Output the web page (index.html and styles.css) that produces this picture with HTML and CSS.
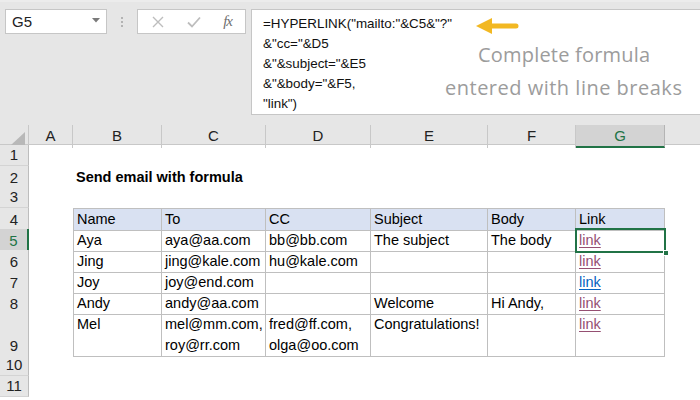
FILE: index.html
```html
<!DOCTYPE html>
<html>
<head>
<meta charset="utf-8">
<link rel="stylesheet" href="styles.css">
</head>
<body>
<div class="app">
  <div class="topbar">
    <div class="namebox">
      <span class="ref">G5</span>
      <svg class="dd" width="8" height="5" viewBox="0 0 8 5"><path d="M0 0H8L4 4.5Z" fill="#7a7a7a"/></svg>
    </div>
    <div class="sep"><i></i><i></i><i></i></div>
    <div class="fxbox">
      <svg width="12" height="12" viewBox="0 0 12 12"><path d="M1 1L11 11M11 1L1 11" stroke="#bdbdbd" stroke-width="1.4" fill="none"/></svg>
      <svg width="14" height="12" viewBox="0 0 14 12"><path d="M1 6.5L5 10.5L13 1.5" stroke="#bdbdbd" stroke-width="1.8" fill="none"/></svg>
      <span class="fx">fx</span>
    </div>
    <div class="formula">
      <div class="code">=HYPERLINK("mailto:"&amp;C5&amp;"?"<br>&amp;"cc="&amp;D5<br>&amp;"&amp;subject="&amp;E5<br>&amp;"&amp;body="&amp;F5,<br>"link")</div>
      <svg class="arrow" width="44" height="16" viewBox="0 0 44 16"><path d="M0 8L16 0V5.5H40A2.5 2.5 0 0 1 40 10.5H16V16Z" fill="#f2b822"/></svg>
      <div class="note n1">Complete formula</div>
      <div class="note n2">entered with line breaks</div>
    </div>
  </div>
  <div class="sheet">
    <div class="row hdr">
      <div class="corner"><svg width="14" height="13" viewBox="0 0 14 13"><path d="M14 0V13H0Z" fill="#b8b8b8"/></svg></div>
      <div class="ch">A</div><div class="ch">B</div><div class="ch">C</div><div class="ch">D</div><div class="ch">E</div><div class="ch">F</div><div class="ch sel">G</div><div class="ch last"></div>
    </div>
    <div class="row"><div class="rh">1</div></div>
    <div class="row"><div class="rh">2</div><div></div><div class="title">Send email with formula</div></div>
    <div class="row"><div class="rh">3</div></div>
    <div class="row th"><div class="rh">4</div><div></div>
      <div class="c first">Name</div><div class="c">To</div><div class="c">CC</div><div class="c">Subject</div><div class="c">Body</div><div class="c">Link</div></div>
    <div class="row"><div class="rh active">5</div><div></div>
      <div class="c first">Aya</div><div class="c">aya@aa.com</div><div class="c">bb@bb.com</div><div class="c">The subject</div><div class="c">The body</div><div class="c cur"><span class="lk v">link</span><span class="handle"></span></div></div>
    <div class="row"><div class="rh">6</div><div></div>
      <div class="c first">Jing</div><div class="c">jing@kale.com</div><div class="c">hu@kale.com</div><div class="c"></div><div class="c"></div><div class="c"><span class="lk v">link</span></div></div>
    <div class="row"><div class="rh">7</div><div></div>
      <div class="c first">Joy</div><div class="c">joy@end.com</div><div class="c"></div><div class="c"></div><div class="c"></div><div class="c"><span class="lk">link</span></div></div>
    <div class="row"><div class="rh">8</div><div></div>
      <div class="c first">Andy</div><div class="c">andy@aa.com</div><div class="c"></div><div class="c">Welcome</div><div class="c">Hi Andy,</div><div class="c"><span class="lk v">link</span></div></div>
    <div class="row tall"><div class="rh">9</div><div></div>
      <div class="c first">Mel</div><div class="c">mel@mm.com,<br>roy@rr.com</div><div class="c">fred@ff.com,<br>olga@oo.com</div><div class="c">Congratulations!</div><div class="c"></div><div class="c"><span class="lk v">link</span></div></div>
    <div class="row"><div class="rh">10</div></div>
    <div class="row"><div class="rh">11</div></div>
  </div>
</div>
</body>
</html>
```
FILE: styles.css
```css
* { box-sizing: border-box; }
html, body { margin: 0; padding: 0; }
body {
  width: 700px; height: 400px; overflow: hidden;
  font-family: "Liberation Sans", Arial, sans-serif;
  font-size: 14.5px; color: #000; background: #fff;
}
.app { width: 700px; height: 400px; overflow: hidden; }
.topbar {
  height: 125px; background: #e6e6e6;
  display: flex; align-items: flex-start;
  padding: 7px 0 0 5px;
  border-top: 2px solid #ececec;
}
.namebox {
  width: 102px; height: 25px; background: #fff;
  border: 1px solid #c6c6c6;
  display: flex; align-items: center; justify-content: space-between;
  padding: 0 6px 0 6px;
}
.ref { font-size: 15px; color: #222; }
.dd { margin-top: -2px; }
.sep {
  width: 30px; height: 25px;
  display: flex; flex-direction: column; align-items: center; justify-content: center; gap: 2px;
}
.sep i { display: block; width: 2px; height: 2px; background: #b3b3b3; }
.fxbox {
  width: 109px; height: 25px; background: #fff;
  border: 1px solid #c6c6c6;
  display: flex; align-items: center; justify-content: space-between;
  padding: 0 13px 0 14px;
}
.fx {
  font-family: "Liberation Serif", serif; font-style: italic;
  font-size: 15px; color: #6f6f6f; letter-spacing: -1px;
}
.formula {
  flex: 1; height: 106px; margin-left: 5px;
  background: #fff; border: 1px solid #c6c6c6; border-right: none;
  position: relative;
  padding: 4px 0 0 11px;
}
.code { line-height: 20px; font-size: 13.4px; color: #111; }
.arrow { position: absolute; left: 224px; top: 8px; }
.note {
  position: absolute; font-family: "Open Sans", sans-serif;
  font-size: 20px; color: #9c9c9c; white-space: nowrap; line-height: 24px;
}
.n1 { left: 226px; top: 33px; letter-spacing: 0.2px; }
.n2 { left: 193px; top: 66px; letter-spacing: 0.5px; }

.row {
  display: grid;
  grid-template-columns: 29px 44px 89px 104px 105px 117px 88px 89px 35px;
  height: 21px;
}
.row.tall { height: 42px; }
.hdr { height: 20px; background: #e6e6e6; border-bottom: 1px solid #c8c8c8; }
.corner {
  border-right: 1px solid #c8c8c8;
  display: flex; align-items: flex-end; justify-content: flex-end; padding: 0 3px 3px 0;
}
.ch {
  text-align: center; line-height: 21px; font-size: 15px; color: #222;
  border-right: 1px solid #c8c8c8;
}
.ch.sel { background: #d3d3d3; color: #217346; border-bottom: 2px solid #217346; border-right-color: #b4b4b4; }
.ch.last { border-right: none; }
.rh {
  background: #e6e6e6; border-right: 1px solid #bdbdbd; border-bottom: 1px solid #d4d4d4;
  text-align: center; font-size: 15px; color: #222;
  display: flex; align-items: flex-end; justify-content: center; line-height: 20px;
}
.rh.active { background: #d3d3d3; color: #217346; border-right: 2px solid #217346; }
.title { grid-column: 3 / 6; font-weight: bold; font-size: 14.5px; line-height: 23px; padding-left: 3px; }
.c {
  border-right: 1px solid #bfbfbf; border-bottom: 1px solid #bfbfbf;
  line-height: 22px; padding: 0 0 0 3px; white-space: nowrap;
}
.c.first { border-left: 1px solid #bfbfbf; }
.th .c { background: #d9e1f2; border-top: 1px solid #bfbfbf; line-height: 21px; }
.tall .c { line-height: 21px; padding-top: 1px; }
.lk { color: #0563c1; text-decoration: underline; text-underline-offset: 2px; }
.lk.v { color: #954f72; }
.cur { position: relative; }
.cur::after {
  content: ""; position: absolute; left: -1px; top: -1px; right: -2px; bottom: -2px;
  border: 2px solid #217346;
}
.handle {
  position: absolute; right: -5px; bottom: -5px; width: 6px; height: 6px;
  background: #217346; border: 1px solid #fff; z-index: 2;
}
```
